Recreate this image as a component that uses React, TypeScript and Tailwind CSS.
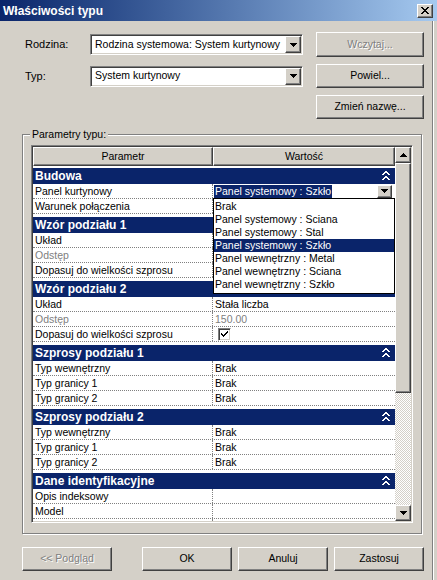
import React from "react";

const raised =
  "border border-t-white border-l-white border-b-[#404040] border-r-[#404040] shadow-[inset_-1px_-1px_0_#808080] bg-[#d4d0c8]";
const sunken =
  "border border-t-[#808080] border-l-[#808080] border-b-white border-r-white shadow-[inset_1px_1px_0_#404040,inset_-1px_-1px_0_#d4d0c8]";
const disabledText = "text-[#808080] [text-shadow:1px_1px_0_#fff]";

function DownArrow() {
  return (
    <svg width="7" height="4" viewBox="0 0 7 4" shapeRendering="crispEdges">
      <path d="M0 0h7v1h-1v1h-1v1h-1v1h-1v-1h-1v-1h-1v-1h-1z" fill="#000" />
    </svg>
  );
}

function UpArrow() {
  return (
    <svg width="7" height="4" viewBox="0 0 7 4" shapeRendering="crispEdges">
      <path d="M3 0h1v1h1v1h1v1h1v1h-7v-1h1v-1h1v-1h1z" fill="#000" />
    </svg>
  );
}

function Collapse() {
  return (
    <svg width="8" height="10" viewBox="0 0 8 10" shapeRendering="crispEdges">
      <path d="M3 0h2v1h1v1h1v1h1v1h-2v-1h-1v-1h-2v1h-1v1h-2v-1h1v-1h1v-1h1z" fill="#fff" />
      <path d="M3 5h2v1h1v1h1v1h1v1h-2v-1h-1v-1h-2v1h-1v1h-2v-1h1v-1h1v-1h1z" fill="#fff" />
    </svg>
  );
}

function Combo({ value }: { value: string }) {
  return (
    <div className={`w-[213px] h-[21px] bg-white flex items-center p-[1px] ${sunken}`}>
      <span className="flex-1 pl-[3px] whitespace-nowrap overflow-hidden">{value}</span>
      <div className={`w-[16px] h-[17px] flex items-center justify-center ${raised}`}>
        <DownArrow />
      </div>
    </div>
  );
}

function Button({ label, disabled, h = "h-[24px]" }: { label: string; disabled?: boolean; h?: string }) {
  return (
    <div className={`w-[108px] ${h} flex items-center justify-center ${raised}`}>
      <span className={disabled ? disabledText : ""}>{label}</span>
    </div>
  );
}

function CheckBox() {
  return (
    <div className={`w-[13px] h-[13px] bg-white ml-[3px] flex items-center justify-center ${sunken}`}>
      <svg width="9" height="9" viewBox="0 0 9 9" shapeRendering="crispEdges">
        <path d="M1 3h1v1h1v1h1v-1h1v-1h1v-1h1v-1h1v2h-1v1h-1v1h-1v1h-1v1h-1v-1h-1v-1h-1v-1h-1z" fill="#000" />
      </svg>
    </div>
  );
}

type Row = { name: string; value?: string; disabled?: boolean; check?: boolean; edit?: boolean };
type Section = { title: string; icon: boolean; rows: Row[] };

const sections: Section[] = [
  {
    title: "Budowa",
    icon: true,
    rows: [{ name: "Panel kurtynowy", edit: true }, { name: "Warunek połączenia" }],
  },
  {
    // values of this group sit under the open list
    title: "Wzór podziału 1",
    icon: false,
    rows: [
      { name: "Układ" },
      { name: "Odstęp", disabled: true },
      { name: "Dopasuj do wielkości szprosu" },
    ],
  },
  {
    title: "Wzór podziału 2",
    icon: false,
    rows: [
      { name: "Układ", value: "Stała liczba" },
      { name: "Odstęp", value: "150.00", disabled: true },
      { name: "Dopasuj do wielkości szprosu", check: true },
    ],
  },
  {
    title: "Szprosy podziału 1",
    icon: true,
    rows: [
      { name: "Typ wewnętrzny", value: "Brak" },
      { name: "Typ granicy 1", value: "Brak" },
      { name: "Typ granicy 2", value: "Brak" },
    ],
  },
  {
    title: "Szprosy podziału 2",
    icon: true,
    rows: [
      { name: "Typ wewnętrzny", value: "Brak" },
      { name: "Typ granicy 1", value: "Brak" },
      { name: "Typ granicy 2", value: "Brak" },
    ],
  },
  {
    title: "Dane identyfikacyjne",
    icon: true,
    rows: [{ name: "Opis indeksowy" }, { name: "Model" }, { name: "" }],
  },
];

const options = [
  "Brak",
  "Panel systemowy : Sciana",
  "Panel systemowy : Stal",
  "Panel systemowy : Szkło",
  "Panel wewnętrzny : Metal",
  "Panel wewnętrzny : Sciana",
  "Panel wewnętrzny : Szkło",
];

function DropList() {
  return (
    <div className="absolute left-0 top-[14px] z-10 w-[182px] h-[96px] bg-white border border-black pt-[1px]">
      {options.map((o) => (
        <div
          key={o}
          className={`h-[13px] leading-[13px] pl-[1px] whitespace-nowrap ${
            o === "Panel systemowy : Szkło" ? "bg-[#0a246a] text-white" : ""
          }`}
        >
          {o}
        </div>
      ))}
    </div>
  );
}

function GridRow({ row }: { row: Row }) {
  return (
    <div className="h-[15px] flex border-b border-dotted border-[#808080] leading-[14px]">
      <div className={`w-[180px] shrink-0 pl-[2px] border-r border-dotted border-[#808080] whitespace-nowrap ${row.disabled ? "text-[#808080]" : ""}`}>
        {row.name}
      </div>
      <div className={`flex-1 relative flex items-center pl-[2px] ${row.disabled ? "text-[#808080]" : ""}`}>
        {row.edit ? (
          <>
            <span className="h-[13px] leading-[13px] bg-[#0a246a] text-white px-[1px] -ml-[1px] whitespace-nowrap">
              Panel systemowy : Szkło
            </span>
            <div className={`ml-auto mr-[3px] w-[15px] h-[13px] flex items-center justify-center ${raised}`}>
              <DownArrow />
            </div>
            <div className="absolute left-0 top-0">
              <DropList />
            </div>
          </>
        ) : row.check ? (
          <CheckBox />
        ) : (
          row.value
        )}
      </div>
    </div>
  );
}

export default function App() {
  return (
    <div className="w-[437px] h-[580px] bg-[#d4d0c8] overflow-hidden font-['Liberation_Sans',Arial,sans-serif] text-[10.5px] text-black select-none">
      {/* Title bar */}
      <div className="h-[21px] flex items-center justify-between bg-linear-to-r from-[#0a246a] to-[#a6caf0]">
        <span className="pl-[3px] text-white font-bold text-[12px]">Właściwości typu</span>
        <div className={`mr-[4px] w-[16px] h-[14px] flex items-center justify-center ${raised}`}>
          <svg width="8" height="7" viewBox="0 0 8 7" shapeRendering="crispEdges">
            <path
              d="M0 0h2v1h1v1h2v-1h1v-1h2v1h-1v1h-1v1h-1v1h1v1h1v1h1v1h-2v-1h-1v-1h-2v1h-1v1h-2v-1h1v-1h1v-1h1v-1h-1v-1h-1v-1h-1z"
              fill="#000"
            />
          </svg>
        </div>
      </div>

      <div className="flex">
        <div className="w-[432px]">
          {/* Family / type */}
          <div className="flex items-center mt-[11px]">
            <span className="ml-[25px] w-[65px] text-[11px]">Rodzina:</span>
            <Combo value="Rodzina systemowa: System kurtynowy" />
            <div className="ml-[13px]">
              <Button label="Wczytaj..." disabled h="h-[25px]" />
            </div>
          </div>
          <div className="flex items-center mt-[7px]">
            <span className="ml-[25px] w-[65px] text-[11px]">Typ:</span>
            <Combo value="System kurtynowy" />
            <div className="ml-[13px]">
              <Button label="Powiel..." />
            </div>
          </div>
          <div className="flex mt-[7px] ml-[316px]">
            <Button label="Zmień nazwę..." />
          </div>

          {/* Group box */}
          <div className="relative mt-[15px] ml-[22px] w-[400px] h-[400px] border border-[#808080] shadow-[inset_1px_1px_0_#fff,1px_1px_0_#fff]">
            <span className="absolute -top-[8px] left-[7px] px-[2px] bg-[#d4d0c8]">Parametry typu:</span>

            <div className={`mt-[10px] ml-[8px] w-[382px] h-[378px] flex bg-white p-[1px] ${sunken}`}>
              <div className="w-[362px] overflow-hidden">
                {/* Header */}
                <div className="flex h-[19px]">
                  <div className={`w-[180px] flex items-center justify-center ${raised}`}>Parametr</div>
                  <div className={`flex-1 flex items-center justify-center ${raised}`}>Wartość</div>
                </div>
                <div className="pt-[2px]">
                  {sections.map((s) => (
                    <div key={s.title} className="pb-[3px]">
                      <div className="h-[16px] bg-[#0a246a] flex items-center justify-between pl-[2px] pr-[5px]">
                        <span className="text-white font-bold text-[12px]">{s.title}</span>
                        {s.icon && <Collapse />}
                      </div>
                      {s.rows.map((r, i) => (
                        <GridRow key={s.title + i} row={r} />
                      ))}
                    </div>
                  ))}
                </div>
              </div>

              {/* Scrollbar */}
              <div className="w-[16px] flex flex-col bg-[repeating-conic-gradient(#fff_0_25%,#d4d0c8_0_50%)] bg-[length:2px_2px]">
                <div className={`h-[16px] flex items-center justify-center ${raised}`}>
                  <UpArrow />
                </div>
                <div className={`h-[230px] ${raised}`} />
                <div className="flex-1" />
                <div className={`h-[16px] flex items-center justify-center ${raised}`}>
                  <DownArrow />
                </div>
              </div>
            </div>
          </div>

          {/* Bottom buttons */}
          <div className="flex mt-[13px] ml-[22px]">
            <div className={`w-[90px] h-[24px] flex items-center justify-center ${raised}`}>
              <span className={disabledText}>&lt;&lt; Podgląd</span>
            </div>
            <div className="flex gap-[6px] ml-[30px]">
              {["OK", "Anuluj", "Zastosuj"].map((b) => (
                <div key={b} className={`w-[90px] h-[24px] flex items-center justify-center ${raised}`}>
                  {b}
                </div>
              ))}
            </div>
          </div>
        </div>
        <div className="flex-1 h-[559px] border-l border-[#808080] shadow-[inset_1px_0_0_#fff]" />
      </div>
    </div>
  );
}
